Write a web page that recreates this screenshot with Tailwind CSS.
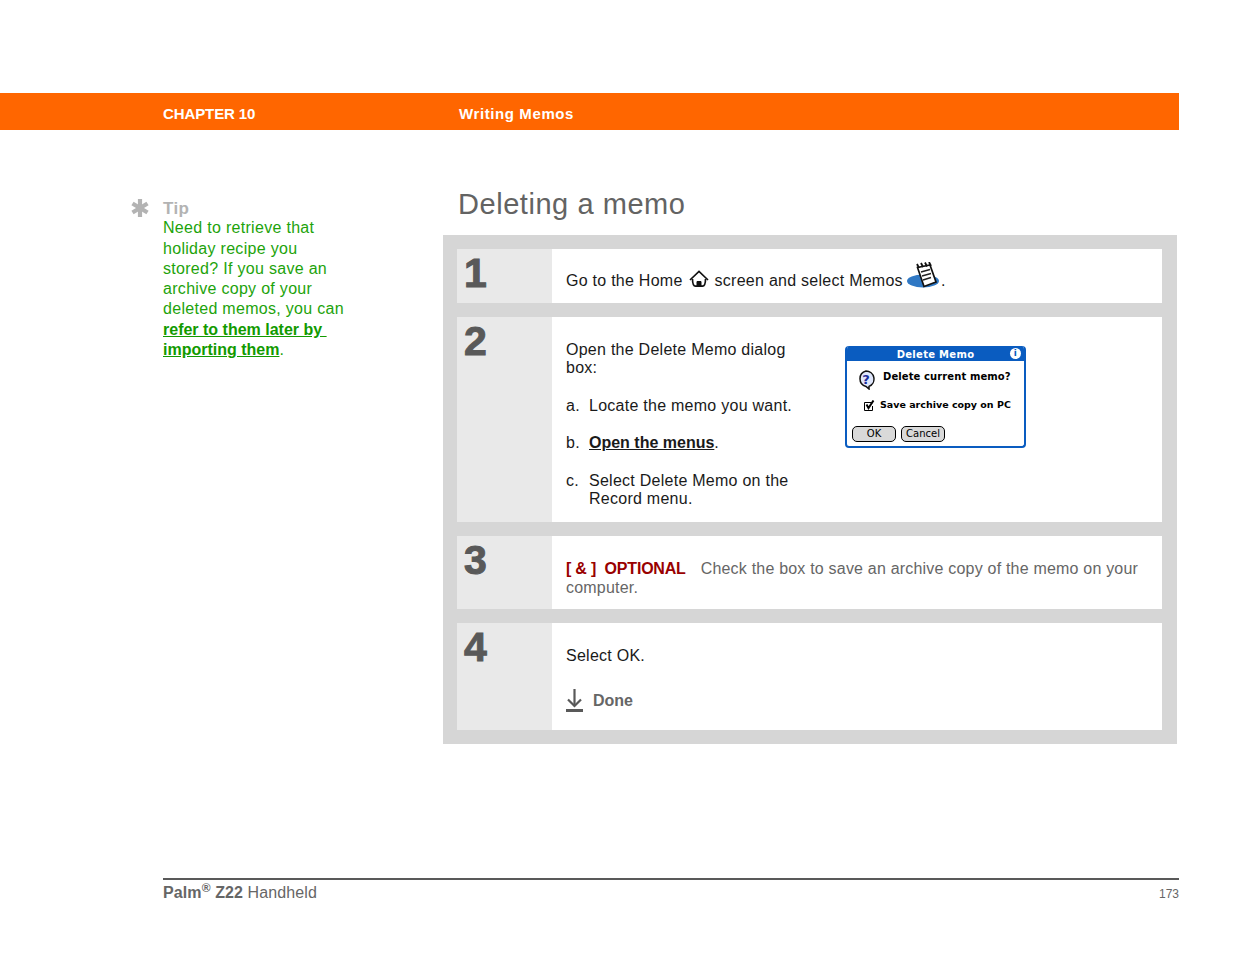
<!DOCTYPE html>
<html lang="en">
<head>
<meta charset="UTF-8">
<title>Deleting a memo</title>
<script src="https://cdn.jsdelivr.net/npm/@tailwindcss/browser@4"></script>
</head>
<body class="bg-white font-['Liberation_Sans',sans-serif] w-[1235px] h-[954px] overflow-hidden">
  <div class="h-[93px]"></div>
  <!-- orange header -->
  <div class="w-[1179px] h-[37px] bg-[#ff6600] flex items-center pl-[163px] pt-[5px] text-white font-bold text-[15px]">
    <div class="w-[296px] tracking-[-0.1px]">CHAPTER 10</div>
    <div class="tracking-[0.6px]">Writing Memos</div>
  </div>

  <div class="flex h-[748px]">
    <!-- tip column -->
    <div class="w-[443px] shrink-0 pl-[131px] pt-[68px] flex items-start">
      <svg class="w-[18px] h-[18px] mt-[1px] mr-[14px] shrink-0" viewBox="0 0 18 18"><g stroke="#b3b3b3" stroke-width="4.2"><path d="M9 0v18"/><path d="M1.5 4.5l15 9"/><path d="M16.5 4.5l-15 9"/></g></svg>
      <div class="w-[184px] text-[16px] leading-[20.3px] tracking-[0.3px] text-[#1da30b]">
        <div class="font-bold text-[17px] text-[#b3b3b3] pt-px -mb-px">Tip</div>
        <div>Need to retrieve that holiday recipe you stored? If you save an archive copy of your deleted memos, you can <a class="font-bold underline text-[#129a00] tracking-[0px]">refer to them later by&nbsp;<wbr>importing them</a>.</div>
      </div>
    </div>

    <!-- steps -->
    <div class="w-[734px]">
      <h1 class="pl-[15px] pt-[56px] h-[105px] text-[29px] leading-[36px] text-[#636363] tracking-[0.55px]">Deleting a memo</h1>
      <div class="bg-[#d6d6d6] pl-[14px] pr-[15px] py-[14px] flex flex-col gap-[14px] text-[16px] leading-[18px] tracking-[0.26px] text-[#1a1a1a]">
        <div class="flex h-[54px] bg-white">
          <div class="w-[95px] bg-[#e9e9e9] pl-[7px] pt-[3px] text-[41px] leading-[42px] font-bold text-[#595959] [-webkit-text-stroke:1px_#595959]">1</div>
          <div class="pl-[14px] pt-[23px] flex items-start">
            <span>Go to the Home</span>
            <svg class="w-[20px] h-[18px] ml-[6px] mr-[6px] -mt-[2px]" viewBox="0 0 20 18" fill="none" stroke="#111" stroke-width="1.7"><path d="M1 10L10 1.5l9 8.5"/><path d="M3.5 9c0 4 .5 7 3 7.2h7c2.500-.2 3-3.200 3-7.200"/><path d="M8 16.500v-5h4v5z" fill="#111" stroke-width="1"/></svg>
            <span>screen and select Memos</span>
            <svg class="w-[34px] h-[27px] ml-[4px] -mt-[10px]" viewBox="0 0 34 27"><ellipse cx="16" cy="19" rx="16" ry="6.500" fill="#2f78c4"/><path d="M10.500 5.500L23 3l6 17-12 4.500z" fill="#fff" stroke="#111" stroke-width="1.700"/><path d="M10 2l2 4M14 1l2 4M18 .5l2 4M22 0l2 4" stroke="#111" stroke-width="1.800" fill="none"/><path d="M14 10l9-2.500M15 14l9-2.500M16 18l8-2.500" stroke="#222" stroke-width="1.400"/></svg>
            <span>.</span>
          </div>
        </div>

        <div class="flex h-[205px] bg-white">
          <div class="w-[95px] bg-[#e9e9e9] pl-[7px] pt-[3px] text-[41px] leading-[42px] font-bold text-[#595959] [-webkit-text-stroke:1px_#595959]">2</div>
          <div class="pl-[14px] pt-[24px] flex items-start">
            <div class="w-[279px]">
              <p class="w-[240px]">Open the Delete Memo dialog box:</p>
              <p class="mt-[20px] flex"><span class="w-[23px]">a.</span><span>Locate the memo you want.</span></p>
              <p class="mt-[19px] flex"><span class="w-[23px]">b.</span><span><a class="font-bold underline tracking-[0px]">Open the menus</a>.</span></p>
              <p class="mt-[20px] flex w-[240px]"><span class="w-[23px] shrink-0">c.</span><span>Select Delete Memo on the Record menu.</span></p>
            </div>
            <!-- dialog -->
            <div class="w-[181px] h-[102px] mt-[5px] border-2 border-t-0 border-[#0a5cc0] rounded-[4px] font-['DejaVu_Sans',sans-serif] font-bold text-[10px] leading-[12px] tracking-normal text-black overflow-hidden">
              <div class="h-[15px] pt-[3px] bg-[#0a5cc0] text-white flex items-center justify-center relative tracking-[0.3px]">Delete Memo
                <span class="absolute right-[3px] top-[2px] w-[11px] h-[11px] rounded-full bg-white text-[#0a5cc0] text-[9px] leading-[11px] text-center">i</span>
              </div>
              <div class="flex items-start pl-[9px] pt-[10px]">
                <svg class="w-[20px] h-[20px] shrink-0 -mt-[1px]" viewBox="0 0 20 20"><path d="M10 1a8 8 0 0 1 3 15.400V19l-3-2.500A8 8 0 0 1 10 1z" fill="#dfe6fb" stroke="#111" stroke-width="1.500"/><text x="10" y="14" text-anchor="middle" font-size="13" font-weight="700" fill="#1a2a9a">?</text></svg>
                <span class="ml-[7px] tracking-[0.1px]">Delete current memo?</span>
              </div>
              <div class="flex items-center pl-[17px] mt-[9px]">
                <svg class="w-[11px] h-[11px] shrink-0" viewBox="0 0 11 11" fill="none" stroke="#000"><path d="M.5 2.500h7M.5 2.500v8h8V6" stroke-width="1"/><path d="M2.500 4.500l2 3.500L9.500 .5" stroke-width="2"/></svg>
                <span class="ml-[5px] text-[9.5px]">Save archive copy on PC</span>
              </div>
              <div class="flex gap-[5px] pl-[5px] mt-[15px] font-normal">
                <span class="w-[44px] h-[16px] rounded-[5px] border border-black bg-[#d9d9d9] text-center leading-[14px]">OK</span>
                <span class="w-[44px] h-[16px] rounded-[5px] border border-black bg-[#d9d9d9] text-center leading-[14px]">Cancel</span>
              </div>
            </div>
          </div>
        </div>

        <div class="flex h-[73px] bg-white">
          <div class="w-[95px] bg-[#e9e9e9] pl-[7px] pt-[3px] text-[41px] leading-[42px] font-bold text-[#595959] [-webkit-text-stroke:1px_#595959]">3</div>
          <div class="pl-[14px] pt-[23px] w-[600px] text-[#666666] leading-[19px] tracking-[0.2px]">
            <span class="font-bold text-[#990000] tracking-[-0.2px]">[ &amp; ]&nbsp; OPTIONAL</span><span class="ml-[15px]">Check the box to save an archive copy of the memo on your computer.</span>
          </div>
        </div>

        <div class="flex h-[107px] bg-white">
          <div class="w-[95px] bg-[#e9e9e9] pl-[7px] pt-[3px] text-[41px] leading-[42px] font-bold text-[#595959] [-webkit-text-stroke:1px_#595959]">4</div>
          <div class="pl-[14px] pt-[24px]">
            <p>Select OK.</p>
            <div class="flex items-center mt-[24px] font-bold text-[#666666] tracking-[0px]">
              <svg class="w-[17px] h-[23px] mr-[10px]" viewBox="0 0 17 23" fill="none" stroke="#595959" stroke-width="2.200"><path d="M8.500 0v17"/><path d="M2 10.500L8.500 17l6.500-6.500"/><path d="M0 21.500h17" stroke-width="3"/></svg>
              <span>Done</span>
            </div>
          </div>
        </div>
      </div>
    </div>
  </div>

  <!-- footer -->
  <div class="ml-[163px] w-[1016px] h-[2px] bg-[#595959]"></div>
  <div class="ml-[163px] w-[1016px] flex justify-between items-end text-[#666666]">
    <div class="text-[16px] leading-[24px] pt-px tracking-[0.1px]"><b>Palm<sup class="text-[12px]">®</sup> Z22</b> Handheld</div>
    <div class="text-[12px] leading-[21px]">173</div>
  </div>
</body>
</html>
